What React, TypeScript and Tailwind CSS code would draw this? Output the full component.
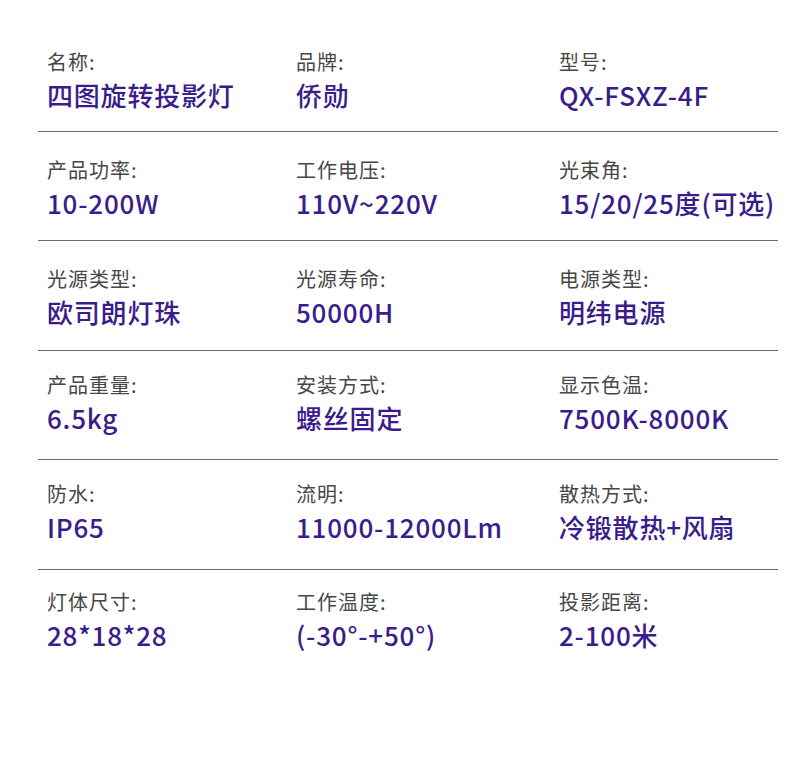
type Cell = [string, string]

const rows: { h: string; pt: string; cells: Cell[] }[] = [
  {
    h: "h-[109.75px]",
    pt: "pt-[25.25px]",
    cells: [["名称:", "四图旋转投影灯"], ["品牌:", "侨勋"], ["型号:", "QX-FSXZ-4F"]],
  },
  {
    h: "h-[109px]",
    pt: "pt-[23px]",
    cells: [["产品功率:", "10-200W"], ["工作电压:", "110V~220V"], ["光束角:", "15/20/25度(可选)"]],
  },
  {
    h: "h-[110.5px]",
    pt: "pt-[23px]",
    cells: [["光源类型:", "欧司朗灯珠"], ["光源寿命:", "50000H"], ["电源类型:", "明纬电源"]],
  },
  {
    h: "h-[108.5px]",
    pt: "pt-[18.5px]",
    cells: [["产品重量:", "6.5kg"], ["安装方式:", "螺丝固定"], ["显示色温:", "7500K-8000K"]],
  },
  {
    h: "h-[110px]",
    pt: "pt-[19px]",
    cells: [["防水:", "IP65"], ["流明:", "11000-12000Lm"], ["散热方式:", "冷锻散热+风扇"]],
  },
  {
    h: "h-[110px]",
    pt: "pt-[17px]",
    cells: [["灯体尺寸:", "28*18*28"], ["工作温度:", "(-30°-+50°)"], ["投影距离:", "2-100米"]],
  },
]

export default function App() {
  return (
    <div
      className="w-[790px] h-[758px] bg-white pt-[22px] pl-[38px] pr-[12px]"
      style={{ fontFamily: '"Noto Sans CJK SC", "Noto Sans", sans-serif' }}
    >
      {rows.map((row, i) => (
        <div
          key={i}
          className={`grid grid-cols-[249px_263px_1fr] pl-[9px] ${row.h} ${row.pt} ${
            i < rows.length - 1 ? "border-b-[1.5px] border-[#6b6b6b]" : ""
          }`}
        >
          {row.cells.map(([label, value]) => (
            <div key={label} className="flex flex-col">
              <span className="text-[20px] leading-[29px] tracking-[1px] text-[#474747]">{label}</span>
              <span className="text-[26px] leading-[38px] font-medium tracking-[0.8px] text-[#3a1c8c] whitespace-nowrap">
                {value}
              </span>
            </div>
          ))}
        </div>
      ))}
    </div>
  )
}
